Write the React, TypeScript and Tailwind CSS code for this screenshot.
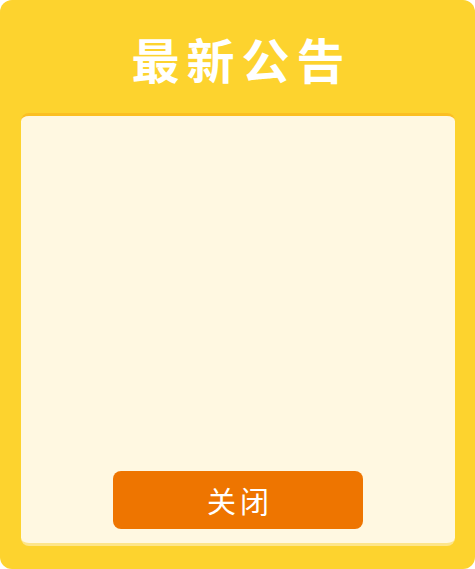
export default function App() {
  return (
    <div className="w-[475px] h-[569px] bg-white" style={{ fontFamily: '"Noto Sans CJK SC", "Noto Sans", sans-serif' }}>
      <div className="w-full h-full rounded-xl bg-[#fdd32e] flex flex-col px-[20px] pl-[21px] pb-[23px]">
        {/* Title */}
        <div className="h-[113px] flex items-center justify-center pt-[2px]">
          <h1 className="text-[48px] font-bold text-white tracking-[7px] pl-[7px] leading-none">最新公告</h1>
        </div>

        {/* Content */}
        <div className="flex-1 rounded-lg bg-[#fff8e1] border-t-[3px] border-t-[#fbbf22] border-b-[3px] border-b-[#fde58a] flex flex-col items-center justify-end pb-[14px]">
          <button className="w-[250px] h-[58px] rounded-lg bg-[#ee7500] text-white text-[29px] tracking-[4px] pl-[4px] leading-none">
            关闭
          </button>
        </div>
      </div>
    </div>
  )
}
